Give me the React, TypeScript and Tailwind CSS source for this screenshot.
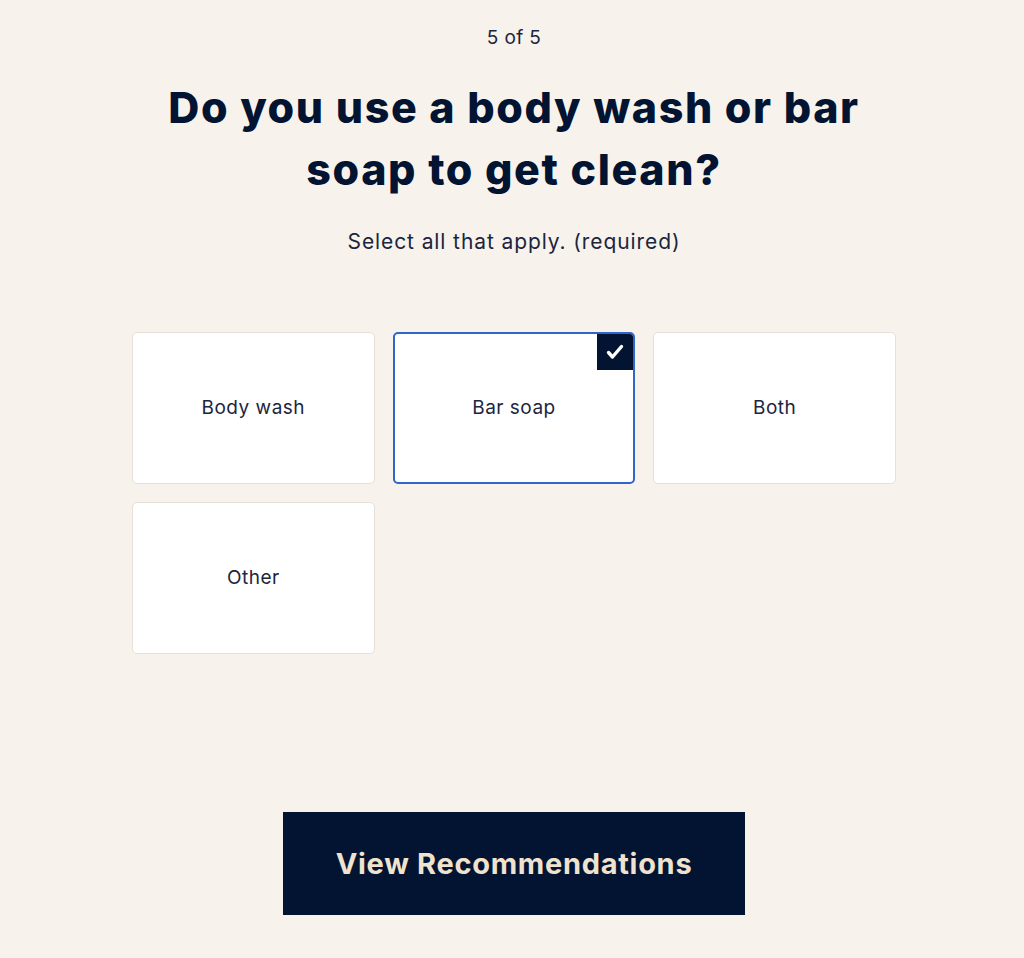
import React, { useState } from "react";

const options = ["Body wash", "Bar soap", "Both", "Other"];

function Check() {
  return (
    <svg viewBox="0 0 24 24" className="h-[24px] w-[24px]" fill="none">
      <path
        d="M5.5 12.5l4 4.5L18.5 6.5"
        stroke="#ffffff"
        strokeWidth="3.4"
        strokeLinecap="round"
        strokeLinejoin="round"
      />
    </svg>
  );
}

export default function App() {
  const [selected, setSelected] = useState<string[]>(["Bar soap"]);

  const toggle = (o: string) =>
    setSelected((s) => (s.includes(o) ? s.filter((x) => x !== o) : [...s, o]));

  return (
    <div
      className="min-h-[958px] w-full bg-[#f7f3ec] text-[#031332]"
      style={{ fontFamily: "Inter, 'Noto Sans', sans-serif" }}
    >
      <div className="mx-auto flex w-[764px] translate-x-[2px] flex-col items-center pt-[26px]">
        <div className="text-[19px] leading-[24px] tracking-[0.4px] text-[#1c2540]">5 of 5</div>

        <h1 className="mt-[26px] whitespace-nowrap text-center text-[43px] font-extrabold leading-[62px] tracking-[1.6px] text-[#031332]">
          Do you use a body wash or bar
          <br />
          soap to get clean?
        </h1>

        <p className="mt-[28px] text-[21px] leading-[28px] tracking-[0.9px] text-[#1c2540]">
          Select all that apply. (required)
        </p>

        <div className="mt-[76px] grid w-full grid-cols-3 gap-[18px]">
          {options.map((o) => {
            const on = selected.includes(o);
            return (
              <button
                key={o}
                onClick={() => toggle(o)}
                className={
                  on
                    ? "relative flex h-[152px] items-center justify-center rounded-[5px] border-2 border-[#2f66c8] bg-white text-[19px] tracking-[0.5px] text-[#1c2540]"
                    : "relative flex h-[152px] items-center justify-center rounded-[5px] border border-[#e6e0d8] bg-white text-[19px] tracking-[0.5px] text-[#1c2540]"
                }
              >
                {on && (
                  <span className="absolute right-0 top-0 flex h-[36px] w-[36px] items-center justify-center rounded-tr-[3px] bg-[#031332]">
                    <Check />
                  </span>
                )}
                {o}
              </button>
            );
          })}
        </div>

        <button className="mt-[158px] flex h-[103px] w-[462px] items-center justify-center bg-[#031332] text-[29px] font-bold tracking-[0.7px] text-[#efe3cf]">
          View Recommendations
        </button>
      </div>
    </div>
  );
}
